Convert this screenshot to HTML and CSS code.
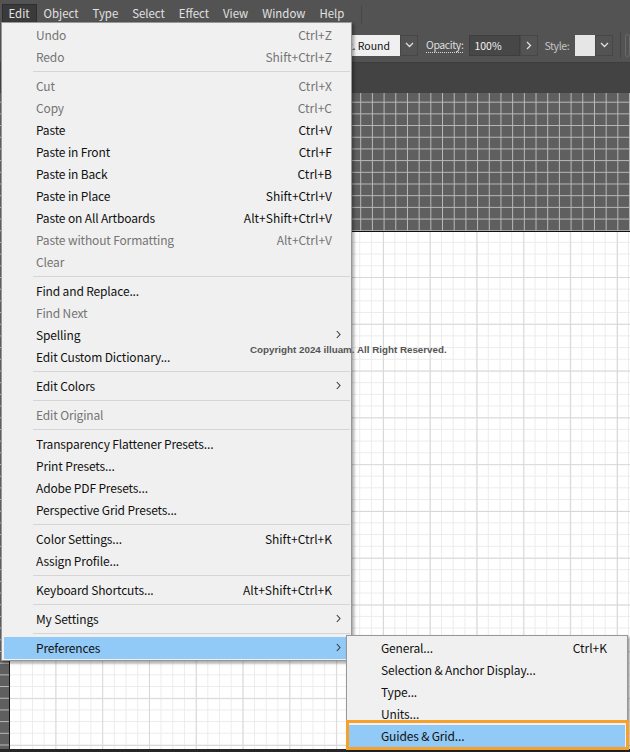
FILE: index.html
```html
<!DOCTYPE html>
<html lang="en">
<head>
    <meta charset="UTF-8">
    <meta name="viewport" content="width=device-width, initial-scale=1.0">
    <title>Edit menu - Preferences</title>
    <link rel="stylesheet" href="styles.css">
</head>
<body>
    <div class="menubar">
        <span class="mb-item active">Edit</span>
        <span class="mb-item">Object</span>
        <span class="mb-item">Type</span>
        <span class="mb-item">Select</span>
        <span class="mb-item">Effect</span>
        <span class="mb-item">View</span>
        <span class="mb-item">Window</span>
        <span class="mb-item">Help</span>
        <span class="mb-sep"></span>
    </div>

    <div class="controlbar">
        <div class="combo">
            <span class="brush-field"><span>5 pt. Round</span></span>
            <span class="ctl-btn"><svg width="9" height="6" viewBox="0 0 9 6"><path d="M1 1l3.5 3.5L8 1" fill="none" stroke="#e0e0e0" stroke-width="1.3"/></svg></span>
        </div>
        <span class="ctl-label opacity">Opacity:</span>
        <div class="combo">
            <span class="num-field">100%</span>
            <span class="ctl-btn"><svg width="6" height="9" viewBox="0 0 6 9"><path d="M1 1l3.5 3.5L1 8" fill="none" stroke="#e0e0e0" stroke-width="1.3"/></svg></span>
        </div>
        <span class="ctl-label dim">Style:</span>
        <div class="combo">
            <span class="swatch"></span>
            <span class="ctl-btn"><svg width="9" height="6" viewBox="0 0 9 6"><path d="M1 1l3.5 3.5L8 1" fill="none" stroke="#e0e0e0" stroke-width="1.3"/></svg></span>
        </div>
        <span class="ctl-sep"></span>
        <span class="ctl-box"></span>
    </div>

    <div class="tabstrip"></div>

    <div class="canvas">
        <div class="artboard"></div>
    </div>
    <div class="bottom-edge"></div>

    <!-- Edit dropdown -->
    <div class="menu edit-menu">
        <div class="row off"><span class="lbl">Undo</span><span class="key">Ctrl+Z</span><span class="arr"></span></div>
        <div class="row off"><span class="lbl">Redo</span><span class="key">Shift+Ctrl+Z</span><span class="arr"></span></div>
        <div class="sep"></div>
        <div class="row off"><span class="lbl">Cut</span><span class="key">Ctrl+X</span><span class="arr"></span></div>
        <div class="row off"><span class="lbl">Copy</span><span class="key">Ctrl+C</span><span class="arr"></span></div>
        <div class="row"><span class="lbl">Paste</span><span class="key">Ctrl+V</span><span class="arr"></span></div>
        <div class="row"><span class="lbl">Paste in Front</span><span class="key">Ctrl+F</span><span class="arr"></span></div>
        <div class="row"><span class="lbl">Paste in Back</span><span class="key">Ctrl+B</span><span class="arr"></span></div>
        <div class="row"><span class="lbl">Paste in Place</span><span class="key">Shift+Ctrl+V</span><span class="arr"></span></div>
        <div class="row"><span class="lbl">Paste on All Artboards</span><span class="key">Alt+Shift+Ctrl+V</span><span class="arr"></span></div>
        <div class="row off"><span class="lbl">Paste without Formatting</span><span class="key">Alt+Ctrl+V</span><span class="arr"></span></div>
        <div class="row off"><span class="lbl">Clear</span><span class="key"></span><span class="arr"></span></div>
        <div class="sep"></div>
        <div class="row"><span class="lbl">Find and Replace...</span><span class="key"></span><span class="arr"></span></div>
        <div class="row off"><span class="lbl">Find Next</span><span class="key"></span><span class="arr"></span></div>
        <div class="row"><span class="lbl">Spelling</span><span class="key"></span><span class="arr"><svg width="5" height="9" viewBox="0 0 5 9"><path d="M0.8 1l3.2 3.5L0.8 8" fill="none" stroke="#3a3a3a" stroke-width="1.1"/></svg></span></div>
        <div class="row"><span class="lbl">Edit Custom Dictionary...</span><span class="key"></span><span class="arr"></span></div>
        <div class="sep"></div>
        <div class="row"><span class="lbl">Edit Colors</span><span class="key"></span><span class="arr"><svg width="5" height="9" viewBox="0 0 5 9"><path d="M0.8 1l3.2 3.5L0.8 8" fill="none" stroke="#3a3a3a" stroke-width="1.1"/></svg></span></div>
        <div class="sep"></div>
        <div class="row off"><span class="lbl">Edit Original</span><span class="key"></span><span class="arr"></span></div>
        <div class="sep"></div>
        <div class="row"><span class="lbl">Transparency Flattener Presets...</span><span class="key"></span><span class="arr"></span></div>
        <div class="row"><span class="lbl">Print Presets...</span><span class="key"></span><span class="arr"></span></div>
        <div class="row"><span class="lbl">Adobe PDF Presets...</span><span class="key"></span><span class="arr"></span></div>
        <div class="row"><span class="lbl">Perspective Grid Presets...</span><span class="key"></span><span class="arr"></span></div>
        <div class="sep"></div>
        <div class="row"><span class="lbl">Color Settings...</span><span class="key">Shift+Ctrl+K</span><span class="arr"></span></div>
        <div class="row"><span class="lbl">Assign Profile...</span><span class="key"></span><span class="arr"></span></div>
        <div class="sep"></div>
        <div class="row"><span class="lbl">Keyboard Shortcuts...</span><span class="key">Alt+Shift+Ctrl+K</span><span class="arr"></span></div>
        <div class="sep"></div>
        <div class="row"><span class="lbl">My Settings</span><span class="key"></span><span class="arr"><svg width="5" height="9" viewBox="0 0 5 9"><path d="M0.8 1l3.2 3.5L0.8 8" fill="none" stroke="#3a3a3a" stroke-width="1.1"/></svg></span></div>
        <div class="sep"></div>
        <div class="row hot"><span class="lbl">Preferences</span><span class="key"></span><span class="arr"><svg width="5" height="9" viewBox="0 0 5 9"><path d="M0.8 1l3.2 3.5L0.8 8" fill="none" stroke="#3a3a3a" stroke-width="1.1"/></svg></span></div>
    </div>

    <!-- Preferences submenu -->
    <div class="menu sub-menu">
        <div class="row"><span class="lbl">General...</span><span class="key">Ctrl+K</span></div>
        <div class="row"><span class="lbl">Selection &amp; Anchor Display...</span><span class="key"></span></div>
        <div class="row"><span class="lbl">Type...</span><span class="key"></span></div>
        <div class="row"><span class="lbl">Units...</span><span class="key"></span></div>
        <div class="row hot marked"><span class="lbl">Guides &amp; Grid...</span><span class="key"></span></div>
    </div>

    <div class="watermark">Copyright 2024 illuam. All Right Reserved.</div>
</body>
</html>
```

FILE: styles.css
```css
body {
    margin: 0;
    width: 630px;
    height: 752px;
    overflow: hidden;
    position: relative;
    background-color: #535353;
    font-family: "Noto Sans CJK KR", "Noto Sans", sans-serif;
    font-size: 12px;
}

/* top menu bar */
.menubar {
    height: 28px;
    display: flex;
    align-items: center;
    padding-left: 2px;
    box-sizing: border-box;
    color: #e2e2e2;
    font-size: 11.4px;
}
.mb-item {
    padding: 0 6.5px 0 5.5px;
    height: 18px;
    line-height: 17px;
    border: 1px solid transparent;
}
.mb-sep {
    width: 1px;
    height: 19px;
    margin-left: 9px;
    background-color: #474747;
}
.mb-item.active {
    background-color: #3a3a3a;
    border-color: #2e2e2e;
}

/* control bar */
.controlbar {
    height: 34px;
    display: flex;
    align-items: center;
    padding-left: 330px;
    border-bottom: 1px solid #3d3d3d;
    color: #dedede;
    font-size: 10.5px;
}
.combo {
    display: flex;
    height: 21px;
}
.brush-field {
    width: 70px;
    display: flex;
    justify-content: flex-end;
    align-items: center;
    padding-right: 10px;
    box-sizing: border-box;
    background-color: #f0f0f0;
    color: #111;
    font-size: 10.5px;
    white-space: nowrap;
}
.ctl-btn {
    width: 18px;
    display: flex;
    align-items: center;
    justify-content: center;
    border: 1px solid #474747;
    box-sizing: border-box;
    background-color: #535353;
}
.ctl-label {
    margin: 0 6px 0 8px;
    letter-spacing: -0.4px;
}
.ctl-label.opacity {
    border-bottom: 1px dotted #d8d8d8;
    line-height: 15px;
}
.ctl-label.dim {
    color: #c4c4c4;
    margin-left: 6px;
}
.num-field {
    width: 51px;
    padding-left: 4px;
    box-sizing: border-box;
    background-color: #474747;
    border: 1px solid #3e3e3e;
    color: #f2f2f2;
    line-height: 19px;
}
.swatch {
    width: 20px;
    background-color: #e6e6e6;
}
.ctl-sep {
    width: 1px;
    height: 26px;
    margin: 0 5px 0 7px;
    background-color: #444;
}
.ctl-box {
    width: 20px;
    height: 21px;
    border: 1px solid #6a6a6a;
    border-radius: 3px;
}

.tabstrip {
    height: 30px;
    background-color: #434343;
}

/* pasteboard + artboard grid */
.canvas {
    height: 656px;
    padding: 138px 0 0 9px;
    box-sizing: border-box;
    background-color: #5f5f5f;
    background-image:
        linear-gradient(to right, #bababa 1px, transparent 1px),
        linear-gradient(to bottom, #bababa 1px, transparent 1px);
    background-size: 11.7px 11.7px;
    background-position: 9.6px 8.7px;
}
.artboard {
    height: 518px;
    border-top: 1px solid #111;
    border-left: 1px solid #111;
    box-sizing: border-box;
    background-color: #fff;
    background-image:
        linear-gradient(to right, #d8d8d8 1px, transparent 1px),
        linear-gradient(to bottom, #d8d8d8 1px, transparent 1px),
        linear-gradient(to right, #ececec 1px, transparent 1px),
        linear-gradient(to bottom, #ececec 1px, transparent 1px);
    background-size: 46.8px 46.8px, 46.8px 46.8px, 11.7px 11.7px, 11.7px 11.7px;
    background-position: 45.4px 45px, 45.4px 45px, 10.3px 9.9px, 10.3px 9.9px;
}
.bottom-edge {
    height: 3px;
    background-color: #262626;
}

/* dropdown menus */
.menu {
    position: absolute;
    background-color: #f0f0f0;
    border: 1px solid #979797;
    box-shadow: 2px 2px 3px rgba(0, 0, 0, 0.35);
    padding: 1px 0;
    color: #111;
}
.edit-menu {
    left: 1px;
    top: 22px;
    width: 349px;
}
.sub-menu {
    left: 346px;
    top: 635px;
    width: 280px;
}
.row {
    position: relative;
    display: flex;
    align-items: center;
    height: 22px;
    margin: 0 2px;
    padding: 0 0 1px 32px;
    box-sizing: border-box;
    white-space: nowrap;
}
.row .lbl {
    flex: 1;
    letter-spacing: -0.15px;
}
.row .arr {
    width: 17px;
    display: flex;
    justify-content: flex-start;
    padding-left: 4px;
    box-sizing: border-box;
}
.sub-menu .row {
    padding-right: 18px;
}
.row.off {
    color: #747474;
}
.row.hot {
    background-color: #91c9f7;
}
.row.marked::after {
    content: "";
    position: absolute;
    left: -3px;
    right: -4px;
    top: -5px;
    bottom: -3px;
    border: 3px solid #f7a12d;
}
.sep {
    height: 1px;
    margin: 3px 1px 3px 31px;
    background-color: #d5d5d5;
}

.watermark {
    position: absolute;
    left: 250px;
    top: 344px;
    font-family: "Liberation Sans", Arial, sans-serif;
    font-size: 9.8px;
    font-weight: bold;
    color: #555;
    white-space: nowrap;
}
```
